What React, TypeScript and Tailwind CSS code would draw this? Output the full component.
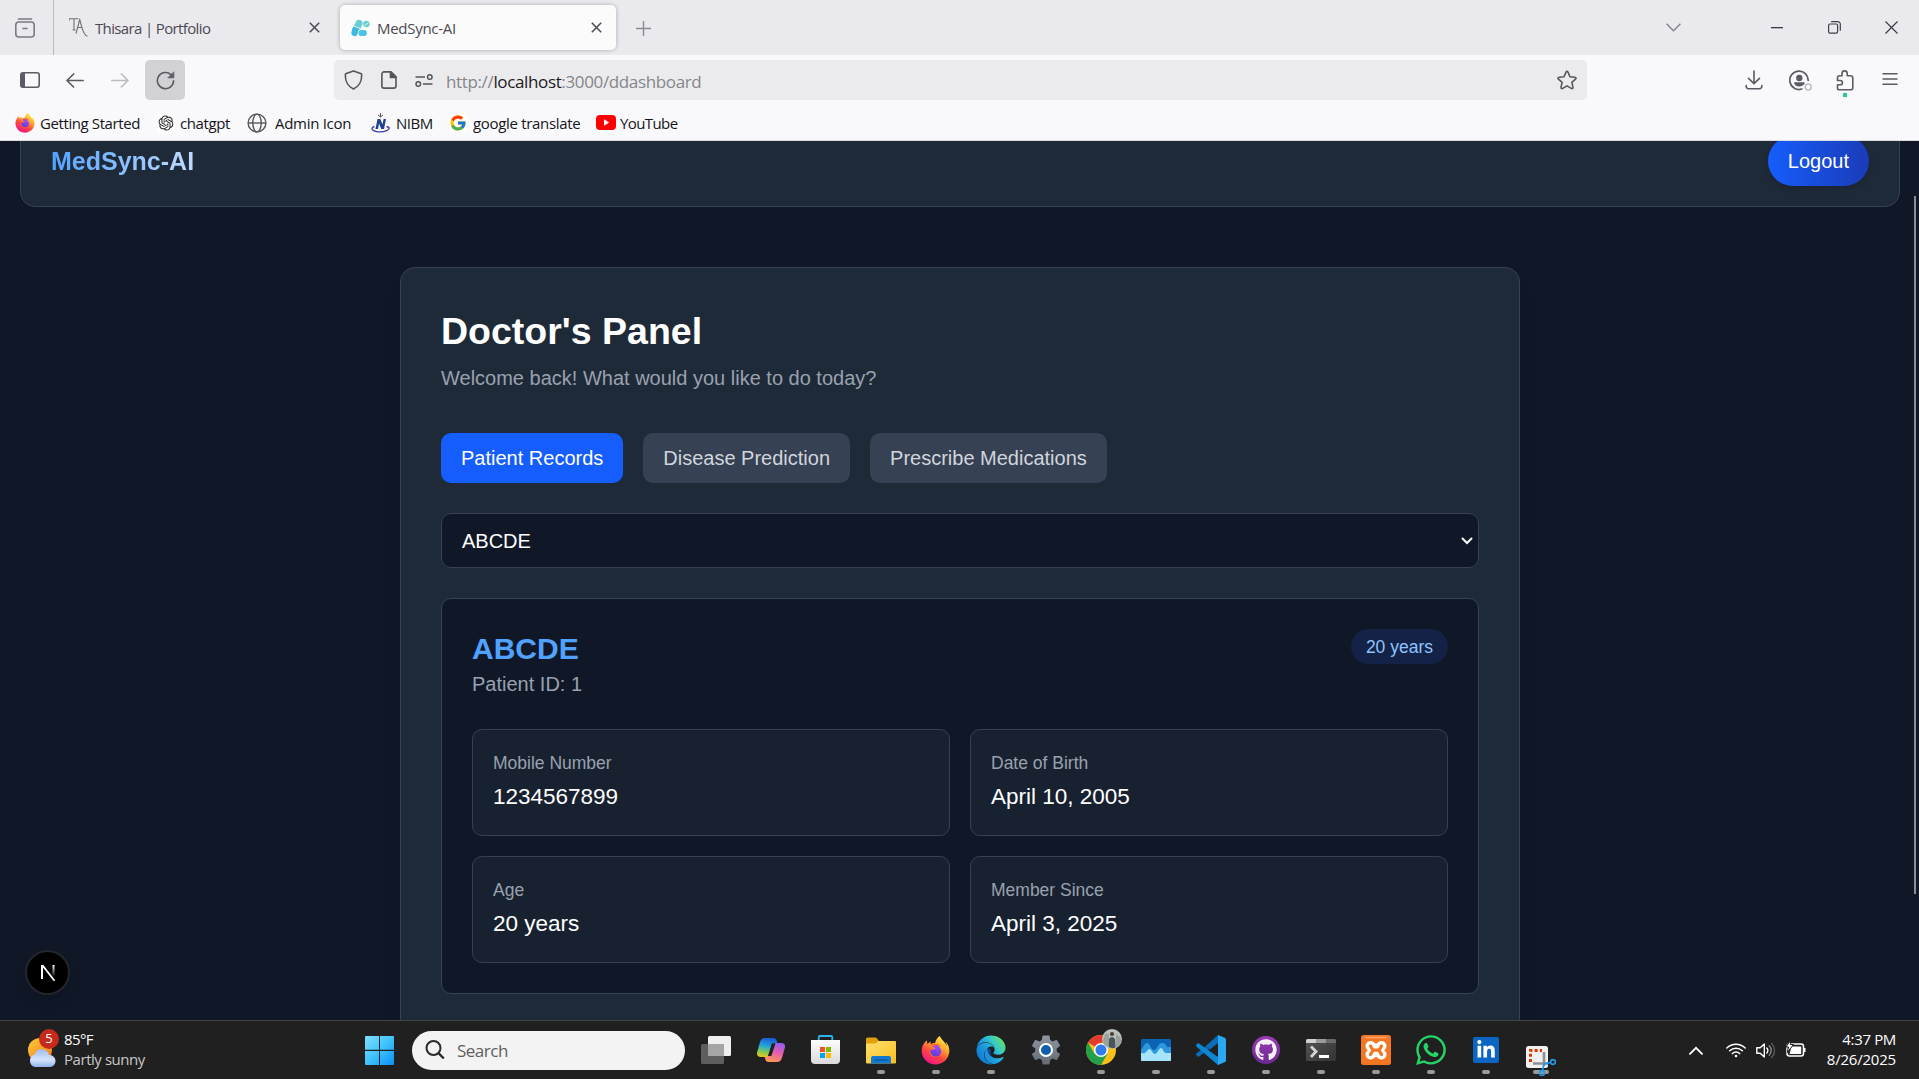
import React from 'react';
import { FcGoogle } from 'react-icons/fc';
import { FaEdge, FaFirefoxBrowser, FaGithub, FaLinkedinIn, FaWhatsapp } from 'react-icons/fa';
import { MdSettings } from 'react-icons/md';
import { RiOpenaiFill } from 'react-icons/ri';

const UI = "font-['Open_Sans','Noto_Sans',sans-serif]";

function Gradients() {
  return (
    <svg width="0" height="0" className="absolute" aria-hidden="true">
      <defs>
        <linearGradient id="fire" x1="0.85" y1="0" x2="0.3" y2="1">
          <stop offset="0" stopColor="#fff44f" />
          <stop offset="0.35" stopColor="#ffb02e" />
          <stop offset="0.65" stopColor="#ff4a3d" />
          <stop offset="1" stopColor="#f0108c" />
        </linearGradient>
        <linearGradient id="globe" x1="0.7" y1="0" x2="0.3" y2="1">
          <stop offset="0" stopColor="#a04dff" />
          <stop offset="1" stopColor="#5b3bd6" />
        </linearGradient>
        <linearGradient id="edge" x1="0" y1="0.9" x2="1" y2="0.2">
          <stop offset="0" stopColor="#0a6fd0" />
          <stop offset="0.45" stopColor="#1f9fdf" />
          <stop offset="0.7" stopColor="#35c9c9" />
          <stop offset="1" stopColor="#6be35a" />
        </linearGradient>
        <linearGradient id="win" x1="0" y1="0" x2="1" y2="1">
          <stop offset="0" stopColor="#7fe0ff" />
          <stop offset="0.5" stopColor="#3fc3fb" />
          <stop offset="1" stopColor="#0a8ff5" />
        </linearGradient>
        <linearGradient id="folder" x1="0" y1="0" x2="1" y2="1">
          <stop offset="0" stopColor="#ffdf70" />
          <stop offset="1" stopColor="#fcbf1e" />
        </linearGradient>
        <linearGradient id="gear" x1="0" y1="0" x2="0" y2="1">
          <stop offset="0" stopColor="#9097a0" />
          <stop offset="1" stopColor="#626a74" />
        </linearGradient>
        <linearGradient id="copL" x1="0.4" y1="0" x2="0.2" y2="1">
          <stop offset="0" stopColor="#1a5fd8" />
          <stop offset="0.4" stopColor="#22a6d8" />
          <stop offset="0.7" stopColor="#7cc957" />
          <stop offset="1" stopColor="#f5c518" />
        </linearGradient>
        <linearGradient id="copR" x1="0.6" y1="0" x2="0.3" y2="1">
          <stop offset="0" stopColor="#9a5cf0" />
          <stop offset="0.5" stopColor="#ec5fa5" />
          <stop offset="1" stopColor="#ff9a52" />
        </linearGradient>
        <linearGradient id="store" x1="0" y1="0" x2="0" y2="1">
          <stop offset="0" stopColor="#fdfdfd" />
          <stop offset="1" stopColor="#d9d9d9" />
        </linearGradient>
        <linearGradient id="sun" x1="0" y1="0" x2="1" y2="1">
          <stop offset="0" stopColor="#ffc83a" />
          <stop offset="1" stopColor="#f07b1c" />
        </linearGradient>
        <linearGradient id="cloud" x1="0" y1="0" x2="0" y2="1">
          <stop offset="0" stopColor="#9dbdf2" />
          <stop offset="0.6" stopColor="#d6e4fb" />
          <stop offset="1" stopColor="#8fb2ec" />
        </linearGradient>
        <linearGradient id="term" x1="0" y1="0" x2="1" y2="1">
          <stop offset="0" stopColor="#555" />
          <stop offset="1" stopColor="#333" />
        </linearGradient>
        <linearGradient id="gh" x1="0" y1="0" x2="0" y2="1">
          <stop offset="0" stopColor="#9a3bb4" />
          <stop offset="1" stopColor="#6a2a92" />
        </linearGradient>
        <linearGradient id="nfade" x1="0" y1="0" x2="0" y2="1">
          <stop offset="0" stopColor="#fff" />
          <stop offset="1" stopColor="#fff" stopOpacity="0" />
        </linearGradient>
      </defs>
    </svg>
  );
}

function Firefox({ size }: { size: number }) {
  return (
    <span className="relative flex">
      <svg width={size} height={size} viewBox="0 0 28 28" className="absolute">
        <circle cx="14" cy="15.5" r="9" fill="#ff6a2b" />
        <circle cx="14.5" cy="14.5" r="5.6" fill="url(#globe)" />
      </svg>
      <FaFirefoxBrowser size={size} fill="url(#fire)" className="relative" />
    </span>
  );
}

function Close() {
  return (
    <svg width="11" height="11" viewBox="0 0 11 11" stroke="#4a4a52" strokeWidth="1.5">
      <path d="M.8.8l9.4 9.4M10.2.8L.8 10.2" />
    </svg>
  );
}

function TabStrip() {
  return (
    <div className="flex h-[55px] items-center bg-[#eae9ee] text-[15px] text-[#4a4a52]">
      <div className="flex w-[53px] justify-center pr-[3px]">
        <svg width="20" height="20" viewBox="0 0 20 20" fill="none" stroke="#7a7a82" strokeWidth="1.6" strokeLinecap="round">
          <path d="M3.5 1h13" />
          <rect x="0.8" y="4" width="18.4" height="15" rx="3" />
          <path d="M8 10.5h4" />
        </svg>
      </div>
      <div className="h-full w-px bg-[#bcbbc2]" />
      <div className="flex h-full w-[286px] items-center pl-[15px] pr-5">
        <svg width="19" height="19" viewBox="0 0 19 19" fill="none" stroke="#6f6f74" strokeWidth="1.1">
          <path d="M0 .8h9.5M0 .8v2M5 .8v11M3.5 12h3M10.5 2.5L7 15.5M10.5 .8c1.5 4 3 17 8 17.4M8.5 9.5h4" />
        </svg>
        <span className="ml-[7px] mt-px whitespace-nowrap tracking-[-0.64px]">Thisara | Portfolio</span>
        <span className="ml-auto"><Close /></span>
      </div>
      <div className="flex h-[45px] w-[276px] items-center rounded-[5px] bg-[#fbfbfb] pl-[11px] pr-[14px] shadow-[0_0_4px_rgba(0,0,0,0.28)]">
        <svg width="19" height="18" viewBox="0 0 19 18">
          <rect x="3.8" y="0.5" width="7" height="11" rx="3.5" fill="#67cfd3" transform="rotate(24 7 6)" />
          <rect x="0.8" y="7" width="6.4" height="10.2" rx="3.2" fill="#3fb9e0" transform="rotate(14 4 12)" />
          <rect x="7.6" y="11" width="8.2" height="6" rx="2.8" fill="#4cc3e4" />
          <circle cx="15.4" cy="5" r="3.2" fill="#67cfc9" />
          <path d="M13.5 6.8l4-3.4M2.4 7l7 2.6" stroke="#fff" strokeWidth=".8" />
        </svg>
        <span className="ml-[7px] mt-px whitespace-nowrap tracking-[-0.28px]">MedSync-AI</span>
        <span className="ml-auto"><Close /></span>
      </div>
      <svg width="15" height="15" viewBox="0 0 15 15" stroke="#8a8a90" strokeWidth="1.4" className="ml-5 mt-0.5">
        <path d="M7.5 0v15M0 7.5h15" />
      </svg>
      <div className="ml-auto flex items-center">
        <svg width="15" height="9" viewBox="0 0 15 9" fill="none" stroke="#85858c" strokeWidth="1.5" className="mr-[90px]">
          <path d="M.6.8l6.9 7 6.9-7" />
        </svg>
        <svg width="12" height="2" viewBox="0 0 12 2" className="mr-[45px]">
          <rect width="12" height="1.3" fill="#3a3a40" />
        </svg>
        <svg width="13" height="13" viewBox="0 0 13 13" fill="none" stroke="#3f3f46" strokeWidth="1.2" className="mr-[44px]">
          <rect x=".6" y="3" width="9" height="9.2" rx="1.4" />
          <path d="M3.2.7h6.6a2.5 2.5 0 0 1 2.5 2.5v6.6" />
        </svg>
        <svg width="13" height="13" viewBox="0 0 13 13" stroke="#3a3a40" strokeWidth="1.2" className="mr-[21px]">
          <path d="M.5.5l12 12M12.5.5l-12 12" />
        </svg>
      </div>
    </div>
  );
}

function Toolbar() {
  return (
    <div className="flex h-[50px] items-center">
      <svg width="20" height="16" viewBox="0 0 20 16" className="ml-5">
        <rect x=".8" y=".8" width="18.4" height="14.4" rx="2.2" fill="none" stroke="#5b5b66" strokeWidth="1.6" />
        <path d="M1 2.5Q1 1 2.5 1H5v14H2.5Q1 15 1 13.5z" fill="#5b5b66" />
      </svg>
      <svg width="18" height="15" viewBox="0 0 18 15" fill="none" stroke="#5b5b66" strokeWidth="1.7" strokeLinecap="round" strokeLinejoin="round" className="ml-[26px]">
        <path d="M7.6 1L1 7.5l6.6 6.5M1.2 7.5h15.9" />
      </svg>
      <svg width="18" height="15" viewBox="0 0 18 15" fill="none" stroke="#bcbbc2" strokeWidth="1.7" strokeLinecap="round" strokeLinejoin="round" className="ml-[27px]">
        <path d="M10.4 1L17 7.5 10.4 14M16.8 7.5H.9" />
      </svg>
      <div className="ml-4 flex size-10 items-center justify-center rounded-[5px] bg-[#d2d2d5]">
        <svg width="19" height="19" viewBox="0 0 19 19" fill="none" stroke="#5b5b66" strokeWidth="1.6" strokeLinecap="round">
          <path d="M17.6 9.8a8.1 8.1 0 1 1-2.6-6.2" />
          <path d="M17.8 1.2v5.6h-5.6z" fill="#5b5b66" stroke="#5b5b66" strokeWidth=".8" strokeLinejoin="round" />
        </svg>
      </div>
      <div className="ml-[149px] flex h-10 w-[1253px] items-center rounded-[5px] bg-[#ebebed] pl-[10px] pr-[9px]">
        <svg width="19" height="20" viewBox="0 0 19 20" fill="none" stroke="#55555c" strokeWidth="1.6" strokeLinejoin="round">
          <path d="M9.5.9l7.2 2.700q1 .4 1 1.400C17.800 11.500 14.500 17 9.500 19.100 4.500 17 1.200 11.500 1.300 5q0-1 1-1.400z" />
        </svg>
        <svg width="16" height="18" viewBox="0 0 16 18" className="ml-[18px]" fill="none" stroke="#55555c" strokeWidth="1.6" strokeLinejoin="round">
          <path d="M3 .9h7l5 5V15a2.100 2.100 0 0 1-2.100 2.100H3A2.100 2.100 0 0 1 .9 15V3A2.100 2.100 0 0 1 3 .9z" />
          <path d="M9.500 1v5.400h5.500z" fill="#55555c" />
        </svg>
        <svg width="18" height="13" viewBox="0 0 18 13" className="ml-[18px]" fill="none" stroke="#55555c" strokeWidth="1.500">
          <circle cx="14.800" cy="3" r="2.300" />
          <path d="M.5 3h9.500M8 10h9.500" />
          <circle cx="3.300" cy="10" r="2.300" />
        </svg>
        <span className="ml-[13px] mt-[3px] whitespace-nowrap text-[17px] tracking-[-0.36px] text-[#85858a]">
          http://<span className="text-[#1a1a1f]">localhost</span>:3000/ddashboard
        </span>
        <svg width="22" height="22" viewBox="0 0 24 24" fill="none" stroke="#55555c" strokeWidth="1.700" strokeLinejoin="round" className="ml-auto">
          <path d="M12 2.600q.8 0 1.100.8l2.100 5 5.300.5c1.500.2 1.900 1.300.8 2.200l-4 3.500 1.200 5.200c.3 1.300-.7 2-1.800 1.400L12 18.400l-4.700 2.800c-1.100.6-2.100-.1-1.800-1.400l1.200-5.200-4-3.500c-1.100-.9-.7-2 .8-2.200l5.300-.5 2.100-5q.3-.8 1.100-.8z" />
        </svg>
      </div>
      <svg width="18" height="20" viewBox="0 0 18 20" fill="none" stroke="#5b5b66" strokeWidth="1.600" strokeLinecap="round" strokeLinejoin="round" className="ml-[158px]">
        <path d="M9 1v12.500M3.500 8.300L9 13.600l5.500-5.300M1.200 15.500v1A2.200 2.200 0 0 0 3.400 18.700h11.200a2.200 2.200 0 0 0 2.200-2.200v-1" />
      </svg>
      <svg width="24" height="21" viewBox="0 0 24 21" fill="none" className="ml-[26px]">
        <path d="M19.200 11A9.200 9.200 0 1 0 13.500 18.800" stroke="#5b5b66" strokeWidth="1.700" />
        <circle cx="10.300" cy="8" r="3.200" fill="#5b5b66" />
        <path d="M5 12.300h10.500V14l-1.800 1.500q-4 2-7 0Q5 14.200 5 12.300z" fill="#5b5b66" />
        <circle cx="19.200" cy="17" r="3" stroke="#bcbbc2" strokeWidth="1.500" />
      </svg>
      <div className="relative ml-[23px]">
        <svg width="18" height="21" viewBox="0 0 18 21" fill="none" stroke="#5b5b66" strokeWidth="1.600" strokeLinejoin="round">
          <path d="M1.500 7.500q0-1.700 1.700-1.700H6V3.500a2.600 2.600 0 0 1 5.200 0v2.300h3.300q2.300 0 2.300 2.200v9.800q0 2-2.100 2H3.300q-1.800 0-1.800-1.900v-3.100h2.800a2.100 2.100 0 0 0 0-4.300H1.500z" />
        </svg>
        <span className="absolute left-[7px] top-[23px] size-1 bg-[#2ac3a2]" />
      </div>
      <svg width="16" height="14" viewBox="0 0 16 14" stroke="#5b5b66" strokeWidth="1.500" strokeLinecap="round" className="mb-0.5 ml-[28px]">
        <path d="M1 1.800h14M1 7h14M1 12.200h14" />
      </svg>
    </div>
  );
}

function Bookmarks() {
  return (
    <div className="flex h-[35px] items-center whitespace-nowrap pl-[15px] text-[15px] tracking-[-0.4px] text-[#15141a]">
      <div className="flex w-[142px] items-center gap-[5px]">
        <Firefox size={20} />
        <span className="pt-0.5">Getting Started</span>
      </div>
      <div className="flex w-[90px] items-center gap-[5px]">
        <span className="flex w-[18px] justify-center rounded bg-white py-0.5"><RiOpenaiFill size={18} color="#222" /></span>
        <span className="pt-0.5">chatgpt</span>
      </div>
      <div className="flex w-[124px] items-center gap-[8px]">
        <svg width="20" height="20" viewBox="0 0 20 20" fill="none" stroke="#55555c" strokeWidth="1.400">
          <circle cx="10" cy="10" r="8.900" />
          <ellipse cx="10" cy="10" rx="4.200" ry="8.900" />
          <path d="M1 10h18" />
        </svg>
        <span className="pt-0.5 tracking-[-0.3px]">Admin Icon</span>
      </div>
      <div className="flex w-[78px] items-center gap-[6px]">
        <svg width="19" height="20" viewBox="0 0 19 20" fill="none">
          <path d="M4.500 16L6.500 6h2.800l2.200 5.500L12.600 6H15l-2 10h-2.700L8 10.500 7 16z" fill="#223f8f" />
          <path d="M3.500 13.500C-1 15 1 18.500 8 18.900c6 .2 11-2.400 10-4.200q-.6-1-2.500-1" stroke="#3b3f9e" strokeWidth="1.400" />
          <path d="M7 2l2.500 2L12 2M9.500 0v4" stroke="#555" strokeWidth="1" />
        </svg>
        <span className="pt-0.5 tracking-[-0.45px]">NIBM</span>
      </div>
      <div className="flex w-[147px] items-center gap-[6px]">
        <span className="rounded bg-white"><FcGoogle size={18} /></span>
        <span className="pt-0.5 tracking-[-0.32px]">google translate</span>
      </div>
      <div className="flex items-center gap-[4px]">
        <svg width="20" height="15" viewBox="0 0 20 15">
          <rect width="20" height="15" rx="4" fill="#f00" />
          <path d="M8 4.300l5.200 3.200L8 10.700z" fill="#fff" />
        </svg>
        <span className="pt-0.5 tracking-[-0.6px]">YouTube</span>
      </div>
    </div>
  );
}

const details = [
  ['Mobile Number', '1234567899'],
  ['Date of Birth', 'April 10, 2005'],
  ['Age', '20 years'],
  ['Member Since', 'April 3, 2025'],
];

function Dashboard() {
  return (
    <div className="relative h-[879px] overflow-hidden bg-gray-900 font-['Liberation_Sans',Arial,sans-serif] text-[20px] leading-[30px] text-white">
      <div className="w-[1920px] px-5">
        <header className="-mt-[26px] flex h-[92px] items-center justify-between rounded-[15px] border border-gray-700 bg-[#1f2a39] px-[30px]">
          <span className="bg-gradient-to-r from-blue-400 to-blue-200 bg-clip-text text-[25px] font-bold leading-[35px] text-transparent">MedSync-AI</span>
          <button className="h-[50px] rounded-full bg-gradient-to-r from-blue-600 to-blue-800 px-5 shadow-md">Logout</button>
        </header>
        <main className="mx-auto mt-[60px] h-[900px] w-[1120px] rounded-[15px] border border-gray-700 bg-[#1f2a39] p-10 shadow-xl">
          <h1 className="pt-px text-[37.5px] font-bold leading-[45px]">Doctor's Panel</h1>
          <p className="mt-[9px] text-gray-400">Welcome back! What would you like to do today?</p>
          <div className="mt-10 flex gap-5">
            <button className="rounded-[10px] bg-blue-600 px-5 py-2.5">Patient Records</button>
            <button className="rounded-[10px] bg-gray-700 px-5 py-2.5 text-gray-300">Disease Prediction</button>
            <button className="rounded-[10px] bg-gray-700 px-5 py-2.5 text-gray-300">Prescribe Medications</button>
          </div>
          <div className="mt-[30px] flex h-[55px] items-center justify-between rounded-[10px] border border-gray-700 bg-gray-900 pl-5 pr-[5px]">
            ABCDE
            <svg width="12" height="8" viewBox="0 0 12 8" fill="none" stroke="#fff" strokeWidth="2" strokeLinecap="round">
              <path d="M1.500 1.500L6 6l4.500-4.500" />
            </svg>
          </div>
          <section className="mt-[30px] rounded-[10px] border border-gray-700 bg-gray-900 p-[30px]">
            <div className="flex items-start justify-between">
              <div>
                <h2 className="text-[30px] font-bold leading-10 text-blue-400">ABCDE</h2>
                <p className="text-gray-400">Patient ID: 1</p>
              </div>
              <span className="rounded-full bg-[#132246] px-[15px] pb-[4px] pt-[6px] text-[17.5px] leading-[25px] text-[#8ec5ff]">20 years</span>
            </div>
            <div className="mt-[30px] grid grid-cols-2 gap-5">
              {details.map(([label, value]) => (
                <div key={label} className="rounded-[10px] border border-gray-700 bg-[#182130] px-5 pb-[21px] pt-[21px]">
                  <p className="text-[17.5px] leading-[25px] text-gray-400">{label}</p>
                  <p className="mt-[3px] text-[22.5px] leading-[35px]">{value}</p>
                </div>
              ))}
            </div>
          </section>
        </main>
      </div>
      <div className="absolute left-[25px] top-[809px] flex size-[45px] items-center justify-center rounded-full border-2 border-[#24262b] bg-black shadow-lg">
        <svg width="16" height="17" viewBox="0 0 16 17">
          <rect x="1" y="1" width="2" height="14" fill="#fff" />
          <path d="M1 1h2.400l12 15.500-1.800.5z" fill="#fff" />
          <rect x="12.500" y="1" width="2" height="12" fill="url(#nfade)" />
        </svg>
      </div>
      <div className="absolute right-[3px] top-[55px] h-[698px] w-0.5 bg-[#8b8d92]" />
    </div>
  );
}

function TaskbarItem({ children, bar = 8 }: { children: React.ReactNode; bar?: number }) {
  return (
    <div className="relative flex h-full w-[55px] items-center justify-center">
      {children}
      {bar > 0 && (
        <span className={`absolute bottom-[5px] h-1 rounded-full bg-[#9a9a9a] ${bar > 8 ? 'w-4' : 'w-2'}`} />
      )}
    </div>
  );
}

function Taskbar() {
  return (
    <footer className="flex h-[59px] items-center border-t border-[#454545] bg-[#202020] text-[15px] text-white">
      <div className="flex w-[365px] items-center pb-0.5 pl-[27px]">
        <div className="relative">
          <svg width="30" height="38" viewBox="0 0 30 38">
            <circle cx="13" cy="20" r="12" fill="url(#sun)" />
            <path d="M8 37a6.500 6.500 0 0 1-.5-12.500A7.500 7.500 0 0 1 22 25a6 6 0 0 1 1 12z" fill="url(#cloud)" />
          </svg>
          <span className="absolute -top-[1px] left-[12px] flex size-5 items-center justify-center rounded-full bg-[#c42b1c] text-[13px]">5</span>
        </div>
        <div className="ml-[7px] leading-5">
          <div className="tracking-[-0.6px]">85°F</div>
          <div className="tracking-[-0.45px] text-[#c8c8c8]">Partly sunny</div>
        </div>
      </div>
      <svg width="29" height="29" viewBox="0 0 30 30" fill="url(#win)">
        <path d="M1 0h13.500v14.300H0V1a1 1 0 0 1 1-1zM15.500 0H29a1 1 0 0 1 1 1v13.300H15.500zM0 15.500h14.500V30H1a1 1 0 0 1-1-1zM15.500 15.500H30V29a1 1 0 0 1-1 1H15.500z" />
      </svg>
      <div className="ml-[18px] flex h-[39px] w-[273px] items-center rounded-full bg-[#f3f3f3] pl-[13px]">
        <svg width="20" height="20" viewBox="0 0 20 20" fill="none" stroke="#2b2b2b" strokeWidth="2">
          <circle cx="8.500" cy="8" r="7" />
          <path d="M13.500 13.200l5.300 5.300" strokeWidth="2.400" />
        </svg>
        <span className="ml-[12px] pt-px text-[17px] tracking-[-0.500px] text-[#5f5f5f]">Search</span>
      </div>
      <div className="ml-[3px] flex h-full items-center">
        <TaskbarItem bar={0}>
          <svg width="30" height="28" viewBox="0 0 30 28">
            <rect x="7" width="23" height="20" rx="1.500" fill="#efefef" />
            <rect y="8" width="23" height="20" rx="1.500" fill="#6e6e6e" fillOpacity=".8" />
            <path d="M7 8h16v12H7z" fill="#a5a5a5" />
          </svg>
        </TaskbarItem>
        <TaskbarItem bar={0}>
          <svg width="28" height="26" viewBox="0 0 28 26">
            <path d="M12 25c-2.500 0-3.300-1.300-3.800-3L7.500 19H13L17 6h7c3.500 0 4.600 2 3.800 5l-2.700 9.500C24.300 23.500 22.500 25 20 25z" fill="url(#copR)" />
            <path d="M16 1c2.500 0 3.300 1.300 3.800 3l.7 2.500H15L11 20H4C.5 20-.6 18 .2 15L2.900 5.500C3.700 2.500 5.500 1 8 1z" fill="url(#copL)" />
            <path d="M15 6.500h3.500L14.300 19H11z" fill="#202020" />
          </svg>
        </TaskbarItem>
        <TaskbarItem bar={0}>
          <svg width="29" height="30" viewBox="0 0 29 30">
            <path d="M7.700 6V2.300Q7.700 1 9 1h11q1.300 0 1.300 1.300V6" fill="none" stroke="#2bb5ee" strokeWidth="1.800" />
            <path d="M0 5h29v20q0 4-4 4H4q-4 0-4-4z" fill="url(#store)" />
            <path d="M9 12h5v5H9z" fill="#f25022" /><path d="M15 12h5v5h-5z" fill="#7fba00" />
            <path d="M9 18h5v5H9z" fill="#00a4ef" /><path d="M15 18h5v5h-5z" fill="#ffb900" />
          </svg>
        </TaskbarItem>
        <TaskbarItem>
          <svg width="30" height="27" viewBox="0 0 30 27">
            <path d="M0 2Q0 .5 1.500.5H9q1 0 2 1L13 4v4H0z" fill="#e0a008" />
            <path d="M0 6.500h9L12.500 4H29q1 0 1 1v20.500q0 1-1 1H1q-1 0-1-1z" fill="url(#folder)" />
            <path d="M5 26.500V21q0-2 2-2h16q2 0 2 2v5.500z" fill="#1379cf" />
            <path d="M8.500 23h13" stroke="#0a4f94" strokeWidth="1.200" />
          </svg>
        </TaskbarItem>
        <TaskbarItem><Firefox size={29} /></TaskbarItem>
        <TaskbarItem>
          <span className="relative flex">
            <svg width="30" height="30" viewBox="0 0 30 30" className="absolute">
              <path d="M9 15q0 13 11 13 6 0 8-6-5 3-10 1-5-3-3-8-3-3-6 0z" fill="#0f4fa0" />
            </svg>
            <FaEdge size={30} fill="url(#edge)" className="relative" />
          </span>
        </TaskbarItem>
        <TaskbarItem bar={0}>
          <span className="relative flex size-[30px] items-center justify-center">
            <MdSettings size={36} fill="url(#gear)" className="absolute max-w-none" />
            <span className="relative size-[14px] rounded-full border-2 border-white bg-[#0f5fae]" />
          </span>
        </TaskbarItem>
        <TaskbarItem>
          <svg width="36" height="36" viewBox="0 0 36 36" className="mb-[6px] ml-[7px]">
            <circle cx="15" cy="21" r="15" fill="#fbc116" />
            <path d="M15 21L2 13.500A15 15 0 0 1 28 13.500H15z" fill="#e33b2e" />
            <path d="M2 13.500A15 15 0 0 0 15 36l6.500-11.300L8.500 24.700z" fill="#25a04a" />
            <circle cx="15" cy="21" r="7" fill="#fff" />
            <circle cx="15" cy="21" r="5.500" fill="#2f7bf0" />
            <circle cx="26" cy="10" r="10" fill="#b9c0bd" />
            <path d="M17 13q0-5 3-9l3 2v12q-5-1-6-5zM30 5l4 3q3 6-2 10l-2-1z" fill="#98a39b" />
            <circle cx="26" cy="5" r="2.100" fill="#4b4038" />
            <path d="M22.800 18l.2-8q3-4 6 0l.5 8.500q-3.500 1.500-6.700-.5z" fill="#4a555c" />
          </svg>
        </TaskbarItem>
        <TaskbarItem>
          <svg width="30" height="22" viewBox="0 0 30 22">
            <rect width="30" height="22" rx="1.500" fill="#0b63b5" />
            <path d="M0 10c2 0 3-6 6-6s4 7 7 7 4-7 8-7 4 3 5 4h4v14H0z" fill="#2f97dc" />
            <path d="M0 14c3 0 3 1 5-1s2-3 3.500-3S12 15 14 15s4-6 6-6 2.500 5 5 5h5v7q0 1-1 1H1q-1 0-1-1z" fill="#a5e4fb" />
          </svg>
        </TaskbarItem>
        <TaskbarItem>
          <svg width="30" height="30" viewBox="0 0 30 30">
            <path d="M22 0L9.500 11.300l4 3.400L22 8z" fill="#0b6db8" />
            <path d="M3 21.500L12.800 14.200 9.600 11.200.3 18.600q-.6.700 0 1.400l1.200 1.400q.7.600 1.500.1z" fill="#0b6db8" />
            <path d="M3 8.500q-.8-.5-1.500.1L.3 10q-.6.700 0 1.400L22 30v-8z" fill="#0f86d2" />
            <path d="M22 0q5 2 7 3 1 .5 1 1.500v21q0 1-1 1.500l-7 3z" fill="#2aa8f2" />
          </svg>
        </TaskbarItem>
        <TaskbarItem>
          <svg width="28" height="28" viewBox="0 0 28 28" className="absolute"><circle cx="14" cy="14" r="14" fill="url(#gh)" /></svg>
          <FaGithub size={22} color="#f5f0f7" className="relative" />
        </TaskbarItem>
        <TaskbarItem>
          <svg width="30" height="22" viewBox="0 0 30 22">
            <rect width="30" height="22" rx="1.500" fill="url(#term)" />
            <path d="M0 4V1.500Q0 0 1.500 0H10v4z" fill="#d0d0d0" /><path d="M10 0h10v4H10z" fill="#9b9b9b" />
            <path d="M20 0h8.500Q30 0 30 1.500V4H20z" fill="#6b6b6b" />
            <path d="M5 7.500l5 5-5 5.500" fill="none" stroke="#d4d4d4" strokeWidth="2.800" />
            <path d="M13 16h10v3H13z" fill="#fff" />
          </svg>
        </TaskbarItem>
        <TaskbarItem>
          <svg width="30" height="30" viewBox="0 0 30 30">
            <rect width="30" height="30" rx="2.500" fill="#f37623" />
            <path d="M4 2.500h22" stroke="#f9a66c" strokeWidth="1.500" />
            <g stroke="#fff" strokeWidth="10" strokeLinecap="round">
              <path d="M9.500 11l11 8.500M20.500 11l-11 8.500" />
            </g>
            <g stroke="#f37623" strokeWidth="3.200" strokeLinecap="round">
              <path d="M9.500 11l2.500 4.200-2.500 4.300M20.500 11L18 15.200l2.500 4.300M12 15.200h6" fill="none" />
            </g>
          </svg>
        </TaskbarItem>
        <TaskbarItem><FaWhatsapp size={34} color="#25d366" /></TaskbarItem>
        <TaskbarItem>
          <span className="flex size-[26px] items-center justify-center rounded-[2px] bg-[#0a66c2]">
            <FaLinkedinIn size={20} color="#fff" />
          </span>
        </TaskbarItem>
        <TaskbarItem bar={16}>
          <svg width="30" height="30" viewBox="0 0 30 30" className="absolute left-[13px] top-[25px] z-10">
            <rect width="22" height="22" rx="2.500" fill="#f0f0f0" />
            <path d="M4.500 16V4.500H16" fill="none" stroke="#d83b01" strokeWidth="3" strokeDasharray="3 2.200" />
            <path d="M18 6v14M7 17.500h15" stroke="#8a9097" strokeWidth="2.600" fill="none" />
            <circle cx="27" cy="16" r="2.400" fill="none" stroke="#1f9be8" strokeWidth="1.700" />
            <circle cx="16" cy="27" r="2.400" fill="none" stroke="#1f9be8" strokeWidth="1.700" />
            <path d="M24.500 16.500L18 18M16.500 24.500L18 18" stroke="#1f9be8" strokeWidth="1.700" />
          </svg>
        </TaskbarItem>
      </div>
      <div className="ml-auto flex items-center pr-[23px]">
        <svg width="14" height="9" viewBox="0 0 14 9" fill="none" stroke="#fff" strokeWidth="1.900" strokeLinecap="round" className="mr-[23px]">
          <path d="M1 7.800l6-6 6 6" />
        </svg>
        <svg width="20" height="16" viewBox="0 0 20 16" fill="none" stroke="#fff" strokeWidth="1.500" strokeLinecap="round" className="mr-[10px]">
          <path d="M.8 6a13 13 0 0 1 18.400 0M3.700 8.800a9 9 0 0 1 12.600 0M6.400 11.600a5 5 0 0 1 7.200 0" />
          <circle cx="10" cy="14" r="1.300" fill="#fff" stroke="none" />
        </svg>
        <svg width="20" height="17" viewBox="0 0 20 17" fill="none" stroke="#fff" strokeWidth="1.400" strokeLinejoin="round" strokeLinecap="round" className="mr-[10px]">
          <path d="M.8 5.800h3.400L8.300 2v13L4.200 11.200H.8z" />
          <path d="M10.800 6a3.500 3.500 0 0 1 0 5" />
          <path d="M13.200 3.800a6.500 6.500 0 0 1 0 9.400" stroke="#8a8a8a" />
          <path d="M15.700 1.500a10 10 0 0 1 0 14" stroke="#5a5a5a" />
        </svg>
        <svg width="20" height="17" viewBox="0 0 20 17" fill="none" className="mb-[3px] mr-[21px]">
          <rect x="1" y="4" width="16.500" height="12" rx="2.500" stroke="#fff" strokeWidth="1.500" />
          <path d="M3.500 14l2-7.500h9.700V14zM18 8h1.500v4H18z" fill="#fff" />
          <path d="M4.800 0L0 7h2.500L1.300 12.500 7.500 4.500H4.300z" fill="#fff" stroke="#202020" strokeWidth="1" />
        </svg>
        <div className="pb-0.5 text-right leading-5 tracking-[-0.2px]">
          <div className="tracking-[-0.35px]">4:37 PM</div>
          <div>8/26/2025</div>
        </div>
      </div>
    </footer>
  );
}

export default function App() {
  return (
    <div className={`flex h-[1079px] w-[1919px] flex-col overflow-hidden ${UI}`}>
      <Gradients />
      <div className="h-[141px] shrink-0 border-b border-[#dcdce0] bg-[#f9f9fb]">
        <TabStrip />
        <Toolbar />
        <Bookmarks />
      </div>
      <Dashboard />
      <Taskbar />
    </div>
  );
}
